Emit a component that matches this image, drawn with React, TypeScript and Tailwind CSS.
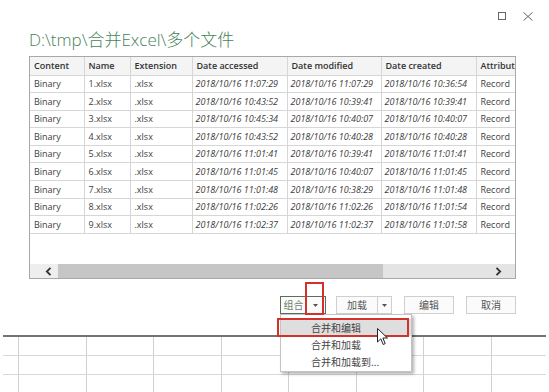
import React from "react";

const rows = [
  ["1.xlsx", "11:07:29", "11:07:29", "10:36:54"],
  ["2.xlsx", "10:43:52", "10:39:41", "10:39:41"],
  ["3.xlsx", "10:45:34", "10:40:07", "10:40:07"],
  ["4.xlsx", "10:43:52", "10:40:28", "10:40:28"],
  ["5.xlsx", "11:01:41", "10:39:41", "11:01:41"],
  ["6.xlsx", "11:01:45", "10:40:07", "11:01:45"],
  ["7.xlsx", "11:01:48", "10:38:29", "11:01:48"],
  ["8.xlsx", "11:02:26", "11:02:26", "11:01:54"],
  ["9.xlsx", "11:02:37", "11:02:37", "11:01:58"],
];

const D = "2018/10/16 ";

export default function App() {
  return (
    <div className="relative w-[549px] h-[392px] overflow-hidden bg-white font-['Open_Sans','Noto_Sans_CJK_SC',sans-serif] text-[#404040]">
      {/* window buttons */}
      <div className="flex h-[30px] justify-end gap-[17px] pr-[16px] pt-[12px]">
        <div className="h-[8px] w-[8px] border border-[#666]" />
        <svg width="10" height="9" viewBox="0 0 10 9">
          <path d="M0.5 0.5 L9.5 8.5 M9.5 0.5 L0.5 8.5" stroke="#666" strokeWidth="1" />
        </svg>
      </div>

      <div className="h-[26px] pl-[29px] text-[17px] leading-[20px] font-light text-[#468459]">
        D:\tmp\合并Excel\多个文件
      </div>

      <div className="ml-[29px] flex h-[223px] w-[487px] flex-col border border-[#a8a8a8]">
        <div className="flex-1 overflow-hidden">
          <table className="w-[545px] table-fixed border-collapse text-[9px]">
            <colgroup>
              <col className="w-[54px]" />
              <col className="w-[46px]" />
              <col className="w-[62px]" />
              <col className="w-[95px]" />
              <col className="w-[94px]" />
              <col className="w-[95px]" />
              <col className="w-[99px]" />
            </colgroup>
            <thead>
              <tr className="h-[18px] bg-[#f4f4f4] text-left font-semibold text-[#333]">
                <Th>Content</Th>
                <Th>Name</Th>
                <Th>Extension</Th>
                <Th>Date accessed</Th>
                <Th>Date modified</Th>
                <Th>Date created</Th>
                <Th>Attributes</Th>
              </tr>
            </thead>
            <tbody>
              {rows.map(r => (
                <tr key={r[0]} className="h-[17.6px]">
                  <Td>Binary</Td>
                  <Td>{r[0]}</Td>
                  <Td>.xlsx</Td>
                  <Td italic>{D + r[1]}</Td>
                  <Td italic>{D + r[2]}</Td>
                  <Td italic>{D + r[3]}</Td>
                  <Td>Record</Td>
                </tr>
              ))}
            </tbody>
          </table>
        </div>
        <div className="flex h-[14px]">
          <div className="flex w-[28px] items-center justify-end bg-[#eeeeee] pr-[6px]">
            <svg width="7" height="9" viewBox="0 0 7 9">
              <path d="M5.5 0.8 L1.8 4.5 L5.5 8.2" stroke="#333" strokeWidth="1.8" fill="none" />
            </svg>
          </div>
          <div className="w-[325px] bg-[#c6c6c6]" />
          <div className="flex flex-1 items-center justify-end bg-[#e4e4e4] pr-[13px]">
            <svg width="7" height="9" viewBox="0 0 7 9">
              <path d="M1.5 0.8 L5.2 4.5 L1.5 8.2" stroke="#333" strokeWidth="1.8" fill="none" />
            </svg>
          </div>
        </div>
      </div>

      {/* buttons */}
      <div className="mt-[17px] flex h-[18px] justify-end pr-[33px] text-[10px] font-['Noto_Sans_CJK_SC',sans-serif] text-[#555]">
        <div className="flex w-[46px] border border-[#5d6d5d] bg-[#fbfbfb]">
          <div className="flex w-[25px] items-center justify-center leading-none text-[#6a7f6a]">组合</div>
          <div className="flex flex-1 items-center justify-center">
            <Caret />
          </div>
        </div>
        <div className="ml-[10px] flex w-[56px] border border-[#cfcfcf] bg-[#fbfbfb]">
          <div className="flex w-[41px] items-center justify-center border-r border-[#cfcfcf] leading-none">加载</div>
          <div className="flex flex-1 items-center justify-center">
            <Caret />
          </div>
        </div>
        <div className="ml-[12px] flex w-[50px] items-center justify-center border border-[#cfcfcf] bg-[#fbfbfb] leading-none">编辑</div>
        <div className="ml-[12px] flex w-[50px] items-center justify-center border border-[#cfcfcf] bg-[#fbfbfb] leading-none">取消</div>
      </div>

      {/* excel grid behind */}
      <div className="mx-[3px] mt-[21px] border-t-2 border-[#6b786b]">
        {[0, 1, 2].map(i => (
          <div key={i} className="flex h-[19px] border-b border-[#d8d8d8]">
            <div className="w-[16px] shrink-0 border-r border-[#d0d0d0]" />
            {[0, 1, 2, 3, 4, 5, 6, 7].map(j => (
              <div key={j} className="w-[67.5px] shrink-0 border-r border-[#d0d0d0]" />
            ))}
          </div>
        ))}
      </div>

      {/* dropdown menu */}
      <div className="absolute left-[280px] top-[314px] h-[58px] w-[132px] border border-[#c4c4c4] bg-white pt-[4px] text-[10px] leading-[17px] font-['Noto_Sans_CJK_SC',sans-serif] text-[#444] shadow-[2px_2px_3px_rgba(0,0,0,0.3)]">
        <div className="h-[17px] bg-[#dedede] pl-[30px]">合并和编辑</div>
        <div className="h-[17px] pl-[30px]">合并和加载</div>
        <div className="h-[17px] pl-[30px]">合并和加载到...</div>
      </div>

      {/* red annotations */}
      <div className="absolute left-[305px] top-[282px] h-[33px] w-[19px] border-2 border-[#d3322c]" />
      <div className="absolute left-[277px] top-[318px] h-[19px] w-[132px] border-2 border-[#d3322c]" />

      {/* cursor */}
      <svg className="absolute left-[377px] top-[328px]" width="12" height="18" viewBox="0 0 12 18">
        <path d="M0.5 0.5 L0.5 14 L3.8 10.8 L6.2 16.5 L8.2 15.6 L5.9 10 L10.5 10 Z" fill="#fff" stroke="#222" strokeWidth="1" strokeLinejoin="round" />
      </svg>
    </div>
  );
}

function Caret() {
  return (
    <svg width="5" height="3" viewBox="0 0 5 3">
      <path d="M0 0 L5 0 L2.5 3 Z" fill="#555" />
    </svg>
  );
}

function Th({ children }: { children: React.ReactNode }) {
  return <th className="overflow-hidden whitespace-nowrap border-r border-b border-[#d6d6d6] pl-[4px] font-semibold">{children}</th>;
}

function Td({ children, italic }: { children: React.ReactNode; italic?: boolean }) {
  return (
    <td className={`overflow-hidden whitespace-nowrap border-r border-b border-[#d6d6d6] ${italic ? "pl-[3px] italic" : "pl-[4px]"}`}>
      {children}
    </td>
  );
}
